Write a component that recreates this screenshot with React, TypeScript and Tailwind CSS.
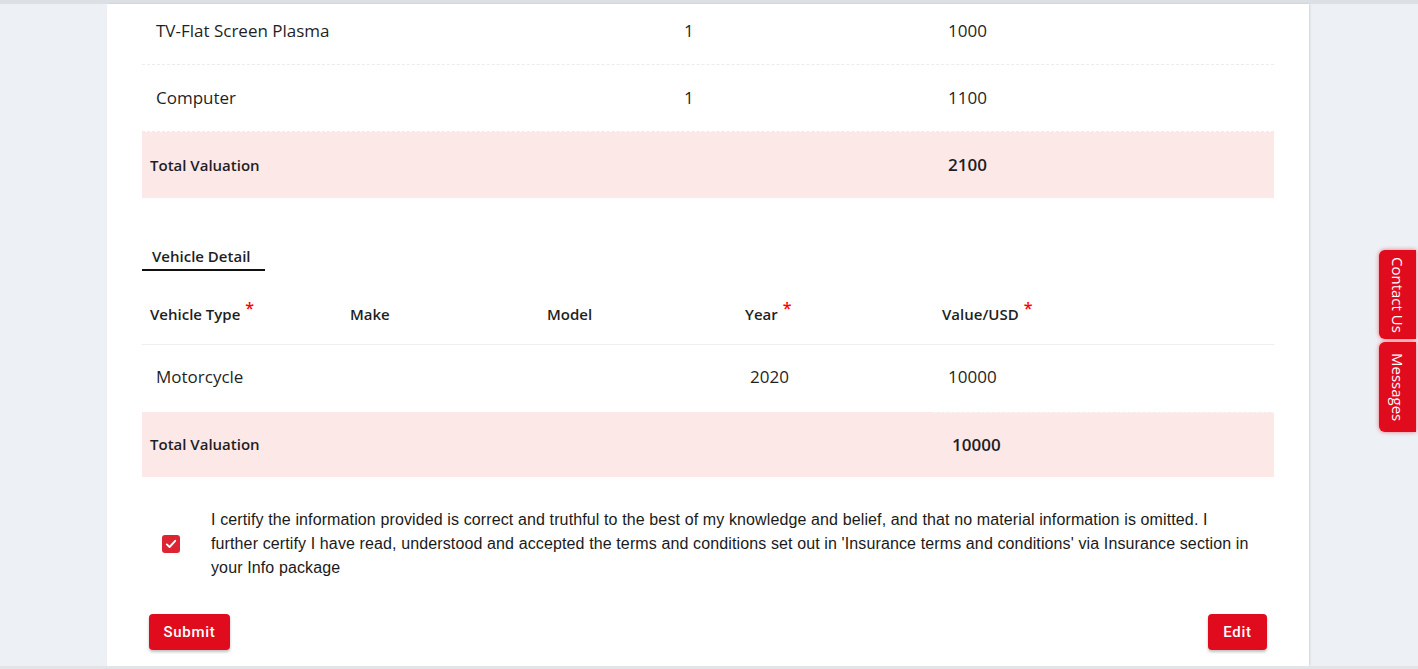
import React from "react";

const Star = () => <span className="text-[#ff0000] text-[16px] leading-none relative -top-[6px] ml-[5px]">*</span>;

export default function App() {
  return (
    <div className="relative h-[669px] w-full overflow-hidden bg-[#edf0f5] font-['Open_Sans',sans-serif] text-[#1f1f1f] flex flex-col">
      <div className="h-[4px] w-full bg-[#dcdfe4] shrink-0" />
      <div className="flex-1 flex">
        <div className="ml-[107px] w-[1202px] h-[662px] bg-white px-[35px] overflow-hidden shadow-[1px_0_2px_rgba(0,0,0,0.12)]">
          <div className="-mt-[6px]">
            {/* Table 1 */}
            <div className="grid grid-cols-[528px_264px_1fr] h-[67px] items-center border-b border-dashed border-[#ececec] text-[17px]">
              <div className="pl-[14px]">TV-Flat Screen Plasma</div>
              <div className="pl-[14px]">1</div>
              <div className="pl-[14px]">1000</div>
            </div>
            <div className="grid grid-cols-[528px_264px_1fr] h-[67px] items-center border-b border-dashed border-[#ececec] text-[17px]">
              <div className="pl-[14px]">Computer</div>
              <div className="pl-[14px]">1</div>
              <div className="pl-[14px]">1100</div>
            </div>
            <div className="grid grid-cols-[792px_1fr] h-[66px] items-center bg-[#fde8e8]">
              <div className="pl-[8px] text-[15px] font-semibold">Total Valuation</div>
              <div className="pl-[14px] text-[17px] font-semibold">2100</div>
            </div>

            {/* Vehicle Detail tab */}
            <div className="mt-[48px] w-[123px] border-b-2 border-[#111] pl-[10px] pb-[3px] text-[15px] font-semibold leading-[20px]">
              Vehicle Detail
            </div>

            {/* Table 2 header */}
            <div className="grid grid-cols-[200px_197px_198px_197px_1fr] h-[74px] pt-[33px] border-b border-[#efefef] text-[15px] font-semibold leading-[20px]">
              <div className="pl-[8px]">Vehicle Type<Star /></div>
              <div className="pl-[8px]">Make</div>
              <div className="pl-[8px]">Model</div>
              <div className="pl-[8px]">Year<Star /></div>
              <div className="pl-[8px]">Value/USD<Star /></div>
            </div>
            <div className="grid grid-cols-[200px_197px_198px_197px_1fr] h-[67px] pb-[3px] items-center text-[17px]">
              <div className="pl-[14px]">Motorcycle</div>
              <div className="pl-[14px]"></div>
              <div className="pl-[14px]"></div>
              <div className="pl-[13px]">2020</div>
              <div className="pl-[14px]">10000</div>
            </div>
            <div className="grid grid-cols-[792px_1fr] h-[65px] items-center bg-[#fde8e8]">
              <div className="pl-[8px] text-[15px] font-semibold">Total Valuation</div>
              <div className="pl-[18px] text-[17px] font-semibold h-full flex items-center border-t border-dashed border-[#f6f6f6]">10000</div>
            </div>

            {/* Certification */}
            <div className="mt-[31px] flex items-center">
              <div className="w-[69px] flex justify-start pl-[20px] shrink-0">
                <div className="w-[18px] h-[18px] rounded-[3px] bg-[#dc2433] flex items-center justify-center">
                  <svg width="12" height="12" viewBox="0 0 12 12" fill="none">
                    <path d="M1.8 6.4 L4.6 9 L10.2 2.8" stroke="white" strokeWidth="1.9" strokeLinecap="round" strokeLinejoin="round" />
                  </svg>
                </div>
              </div>
              <p className="font-['Liberation_Sans',Arial,sans-serif] text-[16px] leading-[24px] tracking-[0.12px] text-[#1a1a1a] w-[1045px]">
                I certify the information provided is correct and truthful to the best of my knowledge and belief, and that no material information is omitted. I further certify I have read, understood and accepted the terms and conditions set out in 'Insurance terms and conditions' via Insurance section in your Info package
              </p>
            </div>

            {/* Buttons */}
            <div className="mt-[34px] flex justify-between px-[7px]">
              <button className="h-[36px] w-[81px] rounded-[4px] bg-[#e00b1c] text-white text-[15px] font-medium tracking-[0.7px] font-['Roboto',sans-serif] shadow-[0_2px_3px_rgba(0,0,0,0.25)]">
                Submit
              </button>
              <button className="h-[36px] w-[59px] rounded-[4px] bg-[#e00b1c] text-white text-[15px] font-medium tracking-[0.7px] font-['Roboto',sans-serif] shadow-[0_2px_3px_rgba(0,0,0,0.25)]">
                Edit
              </button>
            </div>
          </div>
        </div>
      </div>
      <div className="h-[3px] w-full bg-[#e2e4e8] shrink-0" />

      {/* Side tabs */}
      <div className="absolute right-[2px] top-[250px] flex flex-col gap-[3px]">
        <div className="w-[37px] h-[89px] rounded-l-[6px] bg-[#e00b1c] shadow-[0_0_4px_rgba(224,11,28,0.55)] flex items-center justify-center">
          <span className="[writing-mode:vertical-rl] text-white text-[15px] leading-none">Contact Us</span>
        </div>
        <div className="w-[37px] h-[90px] rounded-l-[6px] bg-[#e00b1c] shadow-[0_0_4px_rgba(224,11,28,0.55)] flex items-center justify-center">
          <span className="[writing-mode:vertical-rl] text-white text-[15px] leading-none">Messages</span>
        </div>
      </div>
    </div>
  );
}
